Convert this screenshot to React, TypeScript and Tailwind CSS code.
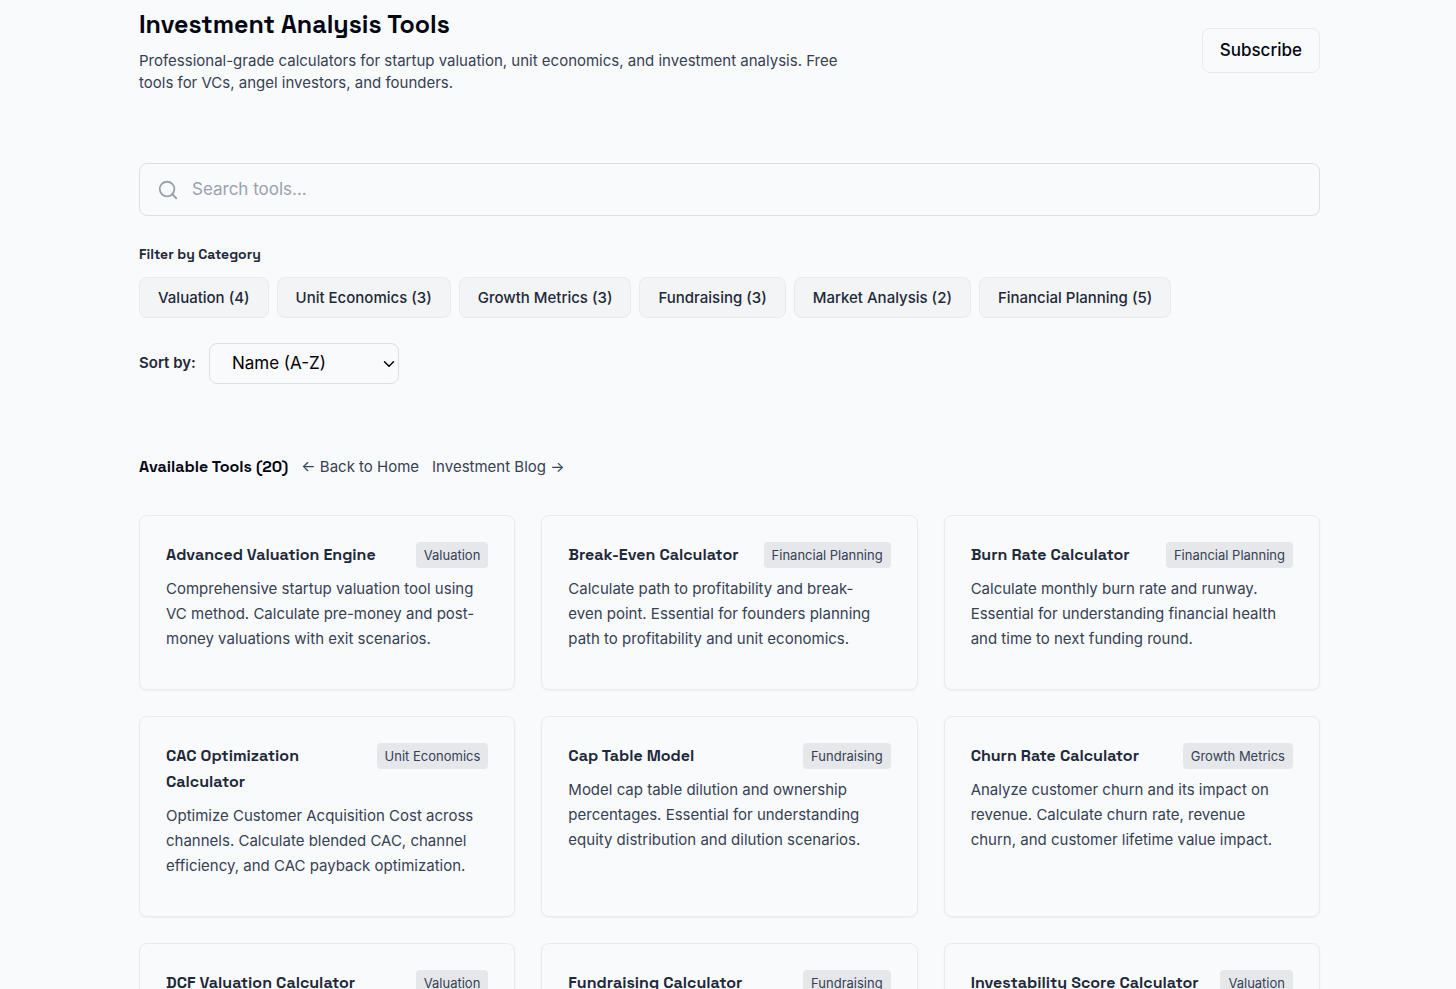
import { useState } from "react";
import { Search, ChevronDown } from "lucide-react";

const categories = [
  { name: "Valuation", count: 4 },
  { name: "Unit Economics", count: 3 },
  { name: "Growth Metrics", count: 3 },
  { name: "Fundraising", count: 3 },
  { name: "Market Analysis", count: 2 },
  { name: "Financial Planning", count: 5 },
];

const tools = [
  {
    title: "Advanced Valuation Engine",
    category: "Valuation",
    text: "Comprehensive startup valuation tool using VC method. Calculate pre-money and post-money valuations with exit scenarios.",
  },
  {
    title: "Break-Even Calculator",
    category: "Financial Planning",
    text: "Calculate path to profitability and break-even point. Essential for founders planning path to profitability and unit economics.",
  },
  {
    title: "Burn Rate Calculator",
    category: "Financial Planning",
    text: "Calculate monthly burn rate and runway. Essential for understanding financial health and time to next funding round.",
  },
  {
    title: "CAC Optimization Calculator",
    category: "Unit Economics",
    text: "Optimize Customer Acquisition Cost across channels. Calculate blended CAC, channel efficiency, and CAC payback optimization.",
  },
  {
    title: "Cap Table Model",
    category: "Fundraising",
    text: "Model cap table dilution and ownership percentages. Essential for understanding equity distribution and dilution scenarios.",
  },
  {
    title: "Churn Rate Calculator",
    category: "Growth Metrics",
    text: "Analyze customer churn and its impact on revenue. Calculate churn rate, revenue churn, and customer lifetime value impact.",
  },
  { title: "DCF Valuation Calculator", category: "Valuation", text: "" },
  { title: "Fundraising Calculator", category: "Fundraising", text: "" },
  { title: "Investability Score Calculator", category: "Valuation", text: "" },
];

type Tool = (typeof tools)[number];

function ToolCard({ tool }: { tool: Tool }) {
  return (
    <article className="rounded-lg border border-[#e9eaed] px-[26px] pt-[26px] pb-[38px] shadow-xs">
      <div className="mb-2 flex items-start justify-between gap-3">
        <h3 className="font-['Space_Grotesk','Inter',sans-serif] text-base leading-[26px] font-semibold text-gray-800">
          {tool.title}
        </h3>
        <span className="shrink-0 rounded bg-gray-200 px-2 text-[13px] leading-[26px] text-gray-700">
          {tool.category}
        </span>
      </div>
      <p className="max-w-[316px] text-[15px] leading-[25px] text-gray-700">{tool.text}</p>
    </article>
  );
}

function App() {
  const [query, setQuery] = useState("");
  const [sort, setSort] = useState("name");

  return (
    <div className="h-screen overflow-hidden bg-[#f9fafc] pl-[3px] font-['Inter',sans-serif]">
      <main className="mx-auto w-full max-w-[1181px] pt-1.5">
        <header className="flex items-center justify-between gap-8">
          <div className="max-w-[720px]">
            <h1 className="mb-2 font-['Space_Grotesk','Inter',sans-serif] text-[25px] leading-9 font-semibold text-gray-950">
              Investment Analysis Tools
            </h1>
            <p className="text-[15px] leading-[22px] text-gray-700">
              Professional-grade calculators for startup valuation, unit economics, and investment
              analysis. Free tools for VCs, angel investors, and founders.
            </p>
          </div>
          <button className="shrink-0 rounded-lg border border-[#e9eaed] px-[17px] text-[17px] leading-[43px] font-medium text-gray-950">
            Subscribe
          </button>
        </header>

        <section className="mt-[69px]">
          <label className="flex h-[53px] items-center gap-[13px] rounded-lg border border-[#dcdee2] px-[17px]">
            <Search className="size-[22px] text-gray-400" strokeWidth={2} />
            <input
              type="search"
              aria-label="Search tools"
              placeholder="Search tools..."
              value={query}
              onChange={(e) => setQuery(e.target.value)}
              className="flex-1 bg-transparent text-[17px] text-gray-900 outline-none placeholder:text-gray-400"
            />
          </label>

          <h2 className="mt-[27px] font-['Space_Grotesk','Inter',sans-serif] text-sm leading-[22px] font-semibold text-gray-800">
            Filter by Category
          </h2>
          <div className="mt-3 flex flex-wrap gap-2">
            {categories.map((c) => (
              <button
                key={c.name}
                className="rounded-lg border border-[#e9eaed] bg-gray-100 px-[18px] text-[15px] leading-[39px] font-medium text-gray-800"
              >
                {c.name} ({c.count})
              </button>
            ))}
          </div>

          <div className="mt-[25px] flex items-center gap-[13px]">
            <label htmlFor="sort" className="text-[15px] font-semibold text-gray-800">
              Sort by:
            </label>
            <div className="relative">
              <select
                id="sort"
                value={sort}
                onChange={(e) => setSort(e.target.value)}
                className="h-[41px] w-[190px] appearance-none rounded-lg border border-[#dcdee2] pr-8 pl-[22px] text-[17px] text-black"
              >
                <option value="name">Name (A-Z)</option>
                <option value="category">Category</option>
              </select>
              <ChevronDown
                className="pointer-events-none absolute top-3 right-px size-[18px] text-black"
                strokeWidth={2}
              />
            </div>
          </div>
        </section>

        <section className="mt-[69px]">
          <div className="mb-[34px] flex items-center gap-[13px] text-[15px] leading-7 text-gray-700">
            <h2 className="font-['Space_Grotesk','Inter',sans-serif] text-base leading-7 font-semibold text-gray-950">
              Available Tools (20)
            </h2>
            <a href="#home">← Back to Home</a>
            <a href="#blog">Investment Blog →</a>
          </div>
          <div className="grid grid-cols-3 gap-[26px]">
            {tools.map((tool) => (
              <ToolCard key={tool.title} tool={tool} />
            ))}
          </div>
        </section>
      </main>
    </div>
  );
}

export default App;
